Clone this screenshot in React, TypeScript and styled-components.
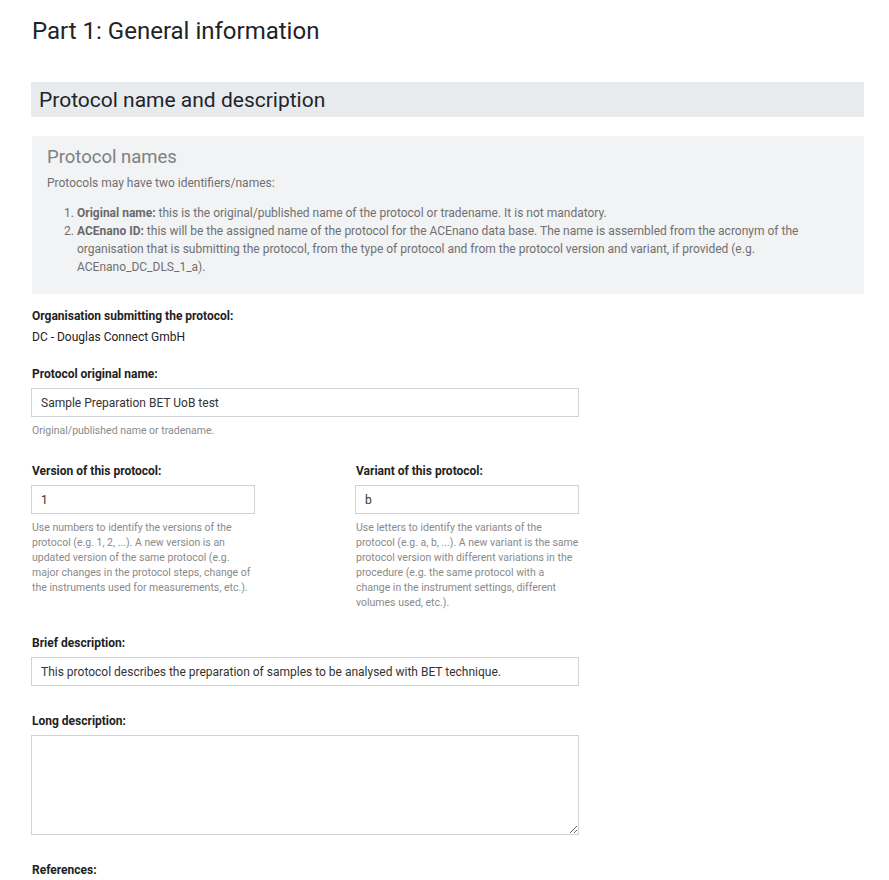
import React from 'react';
import styled, { createGlobalStyle } from 'styled-components';

const GlobalStyle = createGlobalStyle`
  body {
    margin: 0;
    background: #ffffff;
    font-family: Roboto, "Liberation Sans", sans-serif;
    color: #222;
  }
`;

const Page = styled.div`
  padding: 13px 25px 20px 32px;
  width: 832px;
`;

const Title = styled.h1`
  margin: 0 0 33px;
  font-size: 24px;
  font-weight: 400;
  line-height: 36px;
  color: #1f2429;
`;

const SectionHeader = styled.h2`
  margin: 0 0 19px -1px;
  height: 35px;
  padding: 0 8px;
  display: flex;
  align-items: center;
  background: #e8ebee;
  font-size: 21px;
  font-weight: 400;
  color: #1f2429;
`;

const InfoBox = styled.div`
  background: #f2f3f5;
  padding: 8px 15px 18px;
  margin-bottom: 13px;
  color: #707070;
  font-size: 12px;
  line-height: 18px;
  h3 {
    margin: 0 0 4px;
    font-size: 18.5px;
    font-weight: 400;
    line-height: 26px;
    color: #808080;
  }
  p {
    margin: 0 0 12px;
  }
  ol {
    margin: 0;
    padding-left: 30px;
  }
  b {
    font-weight: 700;
    color: #6a6a6a;
  }
`;

const Group = styled.div<{ $gap?: number }>`
  margin-bottom: ${(p) => (p.$gap ?? 24)}px;
`;

const Label = styled.label`
  display: block;
  font-size: 12px;
  font-weight: 700;
  line-height: 18px;
  color: #222;
  margin-bottom: 5px;
`;

const Static = styled.div`
  font-size: 12px;
  line-height: 18px;
  color: #222;
  margin-top: -2px;
`;

const Input = styled.input<{ $width?: number }>`
  display: block;
  box-sizing: border-box;
  width: ${(p) => (p.$width ?? 548)}px;
  height: 29px;
  margin-left: -1px;
  padding: 0 9px;
  border: 1px solid #cfd3d8;
  border-radius: 0;
  font-family: Roboto, "Liberation Sans", sans-serif;
  font-size: 12px;
  color: #333;
  background: #fff;
  outline: none;
`;

const TextArea = styled.textarea`
  display: block;
  box-sizing: border-box;
  width: 548px;
  height: 100px;
  margin-left: -1px;
  border: 1px solid #cfd3d8;
  border-radius: 0;
  font-family: Roboto, "Liberation Sans", sans-serif;
  font-size: 12px;
  outline: none;
`;

const Hint = styled.div`
  margin-top: 6px;
  font-size: 10.5px;
  line-height: 15px;
  color: #8a8a8a;
`;

const Columns = styled.div`
  display: grid;
  grid-template-columns: 224px 224px;
  column-gap: 100px;
  margin-bottom: 24px;
`;

const App = () => {
  return (
    <>
      <GlobalStyle />
      <Page>
        <Title>Part 1: General information</Title>
        <SectionHeader>Protocol name and description</SectionHeader>

        <InfoBox>
          <h3>Protocol names</h3>
          <p>Protocols may have two identifiers/names:</p>
          <ol>
            <li>
              <b>Original name:</b> this is the original/published name of the protocol or
              tradename. It is not mandatory.
            </li>
            <li>
              <b>ACEnano ID:</b> this will be the assigned name of the protocol for the ACEnano
              data base. The name is assembled from the acronym of the organisation that is
              submitting the protocol, from the type of protocol and from the protocol version
              and variant, if provided (e.g. ACEnano_DC_DLS_1_a).
            </li>
          </ol>
        </InfoBox>

        <Group $gap={19}>
          <Label>Organisation submitting the protocol:</Label>
          <Static>DC - Douglas Connect GmbH</Static>
        </Group>

        <Group>
          <Label>Protocol original name:</Label>
          <Input defaultValue="Sample Preparation BET UoB test" />
          <Hint>Original/published name or tradename.</Hint>
        </Group>

        <Columns>
          <div>
            <Label>Version of this protocol:</Label>
            <Input $width={224} defaultValue="1" />
            <Hint>
              Use numbers to identify the versions of the protocol (e.g. 1, 2, ...). A new
              version is an updated version of the same protocol (e.g. major changes in the
              protocol steps, change of the instruments used for measurements, etc.).
            </Hint>
          </div>
          <div>
            <Label>Variant of this protocol:</Label>
            <Input $width={224} defaultValue="b" />
            <Hint>
              Use letters to identify the variants of the protocol (e.g. a, b, ...). A new
              variant is the same protocol version with different variations in the procedure
              (e.g. the same protocol with a change in the instrument settings, different
              volumes used, etc.).
            </Hint>
          </div>
        </Columns>

        <Group $gap={26}>
          <Label>Brief description:</Label>
          <Input defaultValue="This protocol describes the preparation of samples to be analysed with BET technique." />
        </Group>

        <Group $gap={26}>
          <Label>Long description:</Label>
          <TextArea />
        </Group>

        <Group>
          <Label>References:</Label>
        </Group>
      </Page>
    </>
  );
};

export default App;
